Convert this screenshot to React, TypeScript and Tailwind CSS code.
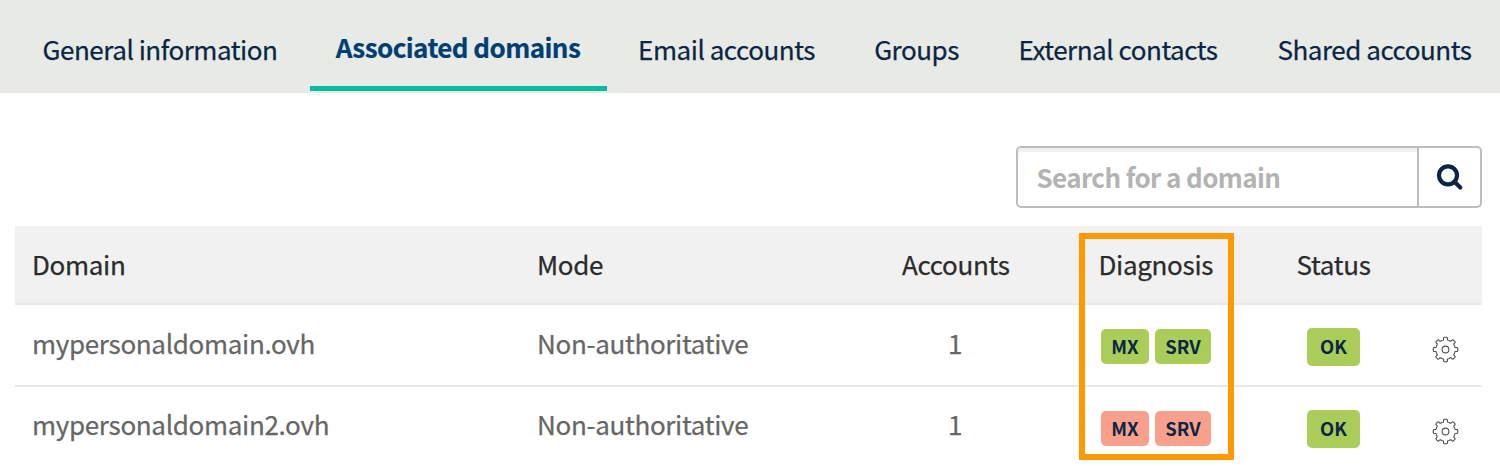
import React from 'react';

const tabs = [
  { label: 'General information', box: 'w-[286px]' },
  { label: 'Associated domains', box: 'w-[297px] pr-px', active: true },
  { label: 'Email accounts', box: 'w-[228px] pr-[3px]' },
  { label: 'Groups', box: 'w-[136px] pr-px' },
  { label: 'External contacts', box: 'w-[252px]' },
  { label: 'Shared accounts', box: 'w-[247px]' },
];

const rows = [
  { domain: 'mypersonaldomain.ovh', mode: 'Non-authoritative', accounts: 1, healthy: true, pad: 'pt-[20px]' },
  { domain: 'mypersonaldomain2.ovh', mode: 'Non-authoritative', accounts: 1, healthy: false, pad: 'pt-[19px]' },
];

const columns = 'grid grid-cols-[505px_323px_194px_216px_160px_69px]';

const teeth = 8;

// Each tooth is a narrow rounded nub between shallow valleys.
function gearOutline() {
  const profile = [
    [-22.5, 9.8],
    [-15, 9.6],
    [-12, 9.8],
    [-10.5, 10.8],
    [-9, 11.9],
    [-5, 12.3],
    [5, 12.3],
    [9, 11.9],
    [10.5, 10.8],
    [12, 9.8],
    [15, 9.6],
  ];
  const points: string[] = [];
  for (let i = 0; i < teeth; i++) {
    for (const [deg, r] of profile) {
      const a = ((i * 45 + deg) * Math.PI) / 180;
      points.push(`${(12.5 + r * Math.cos(a)).toFixed(2)} ${(12.5 + r * Math.sin(a)).toFixed(2)}`);
    }
  }
  return `M${points.join('L')}Z`;
}
const gearPath = gearOutline();

function Gear() {
  return (
    <svg className="overflow-visible" width="25" height="25" viewBox="0 0 25 25" fill="none" stroke="#505050" strokeWidth="1.1" strokeLinejoin="round">
      <path d={gearPath} />
      <circle cx="12.5" cy="12.5" r="3.4" />
    </svg>
  );
}

function Badge({ label, className }: { label: string; className: string }) {
  return (
    <span className={`flex items-center justify-center rounded-[5px] text-[18.5px] font-bold leading-none tracking-normal text-[#0b2545] ${className}`}>
      <span>{label}</span>
    </span>
  );
}

export default function App() {
  return (
    <div className="h-[466px] w-[1500px] overflow-hidden bg-white font-['Noto_Sans_CJK_SC','Noto_Sans',sans-serif] text-[26px] leading-[36px] whitespace-nowrap">
      <nav className="flex h-[93px] gap-[7px] bg-[#e8ebe5] pl-[17px]">
        {tabs.map((t) => (
          <div
            key={t.label}
            className={`flex h-[91px] shrink-0 justify-center ${t.box} ${
              t.active
                ? 'border-b-[5px] border-[#00bfa1] pt-[29px] font-bold tracking-[-0.57px] text-[#003e73] [-webkit-text-stroke:0.2px]'
                : 'pt-[31px] tracking-[-0.47px] text-[#0b2545] [-webkit-text-stroke:0.25px]'
            }`}
          >
            {t.label}
          </div>
        ))}
      </nav>

      <div className="flex justify-end pt-[53px] pr-[18px]">
        <div className="flex h-[62px] w-[466px] rounded-[5px] border-2 border-[#bbbdbf]">
          <div className="flex-1 rounded-l-[3px] border-r-2 border-[#bbbdbf] pt-[11px] pl-[18.5px] font-bold tracking-[-0.63px] text-[#b3b3b3] shadow-[inset_0_4px_1px_#eef0f2]">
            Search for a domain
          </div>
          <div className="flex w-[61px] items-center justify-center">
            <svg width="28" height="28" viewBox="0 0 28 28" fill="none" stroke="#0b2545" strokeWidth="4.2">
              <circle cx="12" cy="12.3" r="9" />
              <path d="M18.5 18.8L24.3 24.6" strokeLinecap="round" />
            </svg>
          </div>
        </div>
      </div>

      <div className="relative mt-[18px] ml-[15px] w-[1467px] tracking-[-0.32px] [-webkit-text-stroke:0.25px]">
        <div className={`${columns} h-[79px] border-b-2 border-[#e8e8e8] bg-[#f1f1f1] pt-[20px] text-[#2b2b2b]`}>
          <div className="pl-[17px]">Domain</div>
          <div className="pl-[17px]">Mode</div>
          <div className="pl-[59px]">Accounts</div>
          <div className="pl-[61.5px]">Diagnosis</div>
          <div className="pl-[1px] text-center">Status</div>
        </div>
        {rows.map((r) => {
          const tone = r.healthy ? 'bg-[#a9cd58]' : 'bg-[#f9a08d]';
          return (
            <div key={r.domain} className={`${columns} h-[82px] border-b-2 border-[#e8e8e8] text-[#666] last:border-b-0`}>
              <div className={`pl-[17px] ${r.pad}`}>{r.domain}</div>
              <div className={`pl-[17px] ${r.pad}`}>{r.mode}</div>
              <div className={`pl-[105px] ${r.pad}`}>{r.accounts}</div>
              <div className="flex gap-[6px] pt-[24px] pl-[64px] [-webkit-text-stroke:0px]">
                <Badge label="MX" className={`h-[35px] w-[48px] ${tone}`} />
                <Badge label="SRV" className={`h-[35px] w-[56px] ${tone}`} />
              </div>
              <div className="flex justify-center pt-[23px] pl-px [-webkit-text-stroke:0px]">
                <Badge label="OK" className="h-[38px] w-[53px] bg-[#a9cd58] pb-[2px]" />
              </div>
              <div className="pt-[32px] pl-[20px]">
                <Gear />
              </div>
            </div>
          );
        })}
        <div className="absolute top-[7px] left-[1064px] h-[227px] w-[155px] border-[6px] border-[#ff9900]" />
      </div>
    </div>
  );
}
